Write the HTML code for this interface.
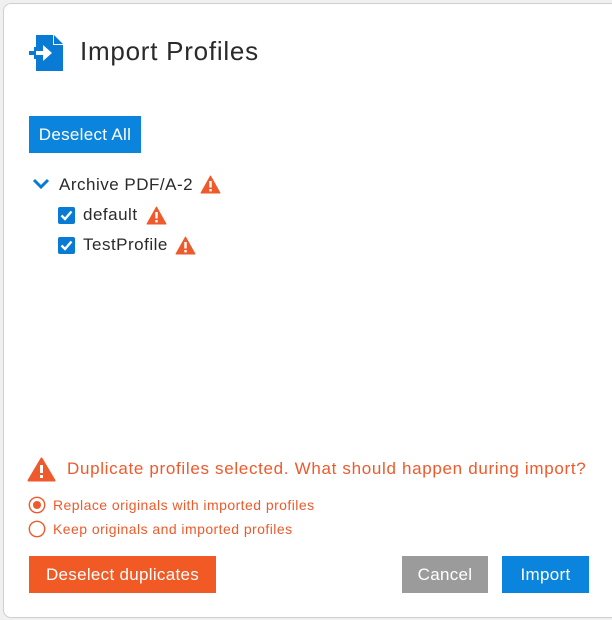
<!DOCTYPE html>
<html><head><style>
body{margin:0;width:612px;height:620px;background:#f0f0f0;font-family:"Liberation Sans",sans-serif;position:relative;overflow:hidden}
.dlg{position:absolute;left:3px;top:3px;width:620px;height:613px;background:#fff;border:1px solid #cfcfcf;border-radius:8px}
.a{position:absolute;white-space:nowrap}
.btn{position:absolute;color:#fff;font-size:17px;display:flex;align-items:center;justify-content:center;letter-spacing:0.3px}
.cb{position:absolute;width:17px;height:17px;background:#0a7bd4;border-radius:2px}
.o{color:#ee5a2c}
</style></head><body>
<div class="dlg"></div>
<svg class="a" style="left:28px;top:34px" width="38" height="38" viewBox="0 0 38 38">
<path d="M8 1h17l10 10v26H8v-12h-2v-12h2z" fill="#0a7bd4"/>
<path d="M26 1l9 9h-9z" fill="#0a7bd4"/>
<rect x="25" y="1" width="1" height="10" fill="#fff"/><rect x="25" y="10" width="10" height="1" fill="#fff"/>
<rect x="1" y="17" width="5" height="4" fill="#0a7bd4"/>
<path d="M8 17h7v-6l9 8-9 8v-6H8z" fill="#fff"/>
</svg>
<div class="a" style="left:80px;top:36px;font-size:26px;color:#2a2a2a;letter-spacing:0.75px">Import Profiles</div>
<div class="btn" style="left:29px;top:116px;width:112px;height:37px;background:#0a84dc">Deselect All</div>
<svg class="a" style="left:32px;top:178px" width="18" height="12"><path d="M2 2l7 7 7-7" stroke="#0a7bd4" stroke-width="3" fill="none"/></svg>
<div class="a" style="left:59px;top:175px;font-size:17px;color:#2a2a2a;letter-spacing:0.5px">Archive PDF/A-2</div>
<svg class="a" style="left:200px;top:175px" width="21" height="19" viewBox="0 0 21 19"><path d="M10.5 1L20 18H1z" fill="#ee5a2c" stroke="#ee5a2c" stroke-linejoin="round"/><rect x="9.3" y="6" width="2.4" height="6.5" fill="#fff"/><rect x="9.3" y="14" width="2.4" height="2.4" fill="#fff"/></svg>
<div class="cb" style="left:58px;top:207px"></div>
<svg class="a" style="left:58px;top:207px" width="17" height="17"><path d="M3.5 8.5l3.5 3.5 6.5-7.5" stroke="#fff" stroke-width="2.4" fill="none"/></svg>
<div class="a" style="left:83px;top:205px;font-size:17px;color:#2a2a2a;letter-spacing:0.5px">default</div>
<svg class="a" style="left:146px;top:206px" width="21" height="19" viewBox="0 0 21 19"><path d="M10.5 1L20 18H1z" fill="#ee5a2c" stroke="#ee5a2c" stroke-linejoin="round"/><rect x="9.3" y="6" width="2.4" height="6.5" fill="#fff"/><rect x="9.3" y="14" width="2.4" height="2.4" fill="#fff"/></svg>
<div class="cb" style="left:58px;top:237px"></div>
<svg class="a" style="left:58px;top:237px" width="17" height="17"><path d="M3.5 8.5l3.5 3.5 6.5-7.5" stroke="#fff" stroke-width="2.4" fill="none"/></svg>
<div class="a" style="left:83px;top:235px;font-size:17px;color:#2a2a2a;letter-spacing:0.5px">TestProfile</div>
<svg class="a" style="left:175px;top:236px" width="21" height="19" viewBox="0 0 21 19"><path d="M10.5 1L20 18H1z" fill="#ee5a2c" stroke="#ee5a2c" stroke-linejoin="round"/><rect x="9.3" y="6" width="2.4" height="6.5" fill="#fff"/><rect x="9.3" y="14" width="2.4" height="2.4" fill="#fff"/></svg>
<svg class="a" style="left:27px;top:457px" width="29" height="25" viewBox="0 0 29 25"><path d="M14.5 1.5L27.5 23.5H1.5z" fill="#ee5a2c" stroke="#ee5a2c" stroke-width="2" stroke-linejoin="round"/><rect x="13" y="8" width="3" height="8" fill="#fff"/><rect x="13" y="18" width="3" height="3" fill="#fff"/></svg>
<div class="a o" style="left:67px;top:459px;font-size:17px;letter-spacing:0.68px">Duplicate profiles selected. What should happen during import?</div>
<svg class="a" style="left:28px;top:496px" width="18" height="18"><circle cx="9" cy="9" r="7.7" stroke="#ee5a2c" stroke-width="1.4" fill="none"/><circle cx="9" cy="9" r="4" fill="#ee5a2c"/></svg>
<div class="a o" style="left:53px;top:497px;font-size:14px;letter-spacing:0.45px">Replace originals with imported profiles</div>
<svg class="a" style="left:28px;top:520px" width="18" height="18"><circle cx="9" cy="9" r="7.7" stroke="#ee5a2c" stroke-width="1.4" fill="none"/></svg>
<div class="a o" style="left:53px;top:521px;font-size:14px;letter-spacing:0.45px">Keep originals and imported profiles</div>
<div class="btn" style="left:29px;top:556px;width:187px;height:37px;background:#f15a24">Deselect duplicates</div>
<div class="btn" style="left:402px;top:556px;width:86px;height:37px;background:#9b9b9b">Cancel</div>
<div class="btn" style="left:502px;top:556px;width:87px;height:37px;background:#0a84dc">Import</div>
</body></html>
